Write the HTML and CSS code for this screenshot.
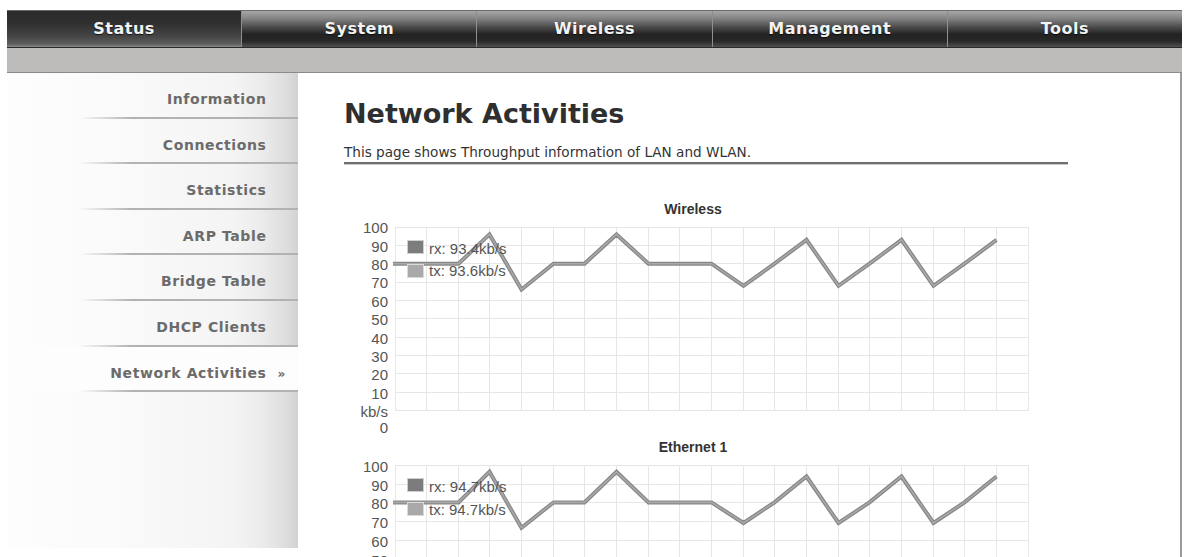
FILE: index.html
```html
<!DOCTYPE html>
<html lang="en">
<head>
<meta charset="utf-8">
<title>Network Activities</title>
<link rel="stylesheet" href="styles.css">
</head>
<body>
<div class="page">
  <nav class="topnav">
    <a class="tab active">Status</a>
    <a class="tab">System</a>
    <a class="tab">Wireless</a>
    <a class="tab">Management</a>
    <a class="tab">Tools</a>
  </nav>
  <div class="strip"></div>
  <div class="layout">
    <aside class="sidebar">
      <ul class="menu">
        <li class="item">Information</li>
        <li class="item">Connections</li>
        <li class="item">Statistics</li>
        <li class="item">ARP Table</li>
        <li class="item">Bridge Table</li>
        <li class="item">DHCP Clients</li>
        <li class="item active">Network Activities<span class="marker">&raquo;</span></li>
      </ul>
    </aside>
    <main class="content">
      <h1 class="title">Network Activities</h1>
      <p class="desc">This page shows Throughput information of LAN and WLAN.</p>
      <div class="charts">
        <svg class="chart" width="724" height="238" viewBox="0 0 724 238">
          <text class="chart-title" x="349" y="16" text-anchor="middle">Wireless</text>
          <path class="grid" d="M51.5 29V213M82.5 29V213M114.5 29V213M145.5 29V213M177.5 29V213M209.5 29V213M240.5 29V213M272.5 29V213M304.5 29V213M335.5 29V213M367.5 29V213M399.5 29V213M430.5 29V213M462.5 29V213M494.5 29V213M525.5 29V213M557.5 29V213M589.5 29V213M620.5 29V213M652.5 29V213M684.5 29V213M51 29.5H685M51 47.5H685M51 65.5H685M51 84.5H685M51 102.5H685M51 120.5H685M51 139.5H685M51 157.5H685M51 175.5H685M51 194.5H685M51 212.5H685"/>
          <g class="axis" text-anchor="end">
            <text x="44" y="35.3">100</text>
            <text x="44" y="53.7">90</text>
            <text x="44" y="72">80</text>
            <text x="44" y="90.4">70</text>
            <text x="44" y="108.8">60</text>
            <text x="44" y="127.2">50</text>
            <text x="44" y="145.5">40</text>
            <text x="44" y="163.9">30</text>
            <text x="44" y="182.3">20</text>
            <text x="44" y="200.6">10</text>
            <text x="44" y="219">kb/s</text>
            <text x="44" y="235">0</text>
          </g>
          <polyline class="line-rx" points="49,65.7 82.5,65.7 114.5,65.7 145.5,36.4 177.5,91.5 209.5,65.7 240.5,65.7 272.5,36.4 304.5,65.7 335.5,65.7 367.5,65.7 399.5,87.8 430.5,65.7 462.5,41.9 494.5,87.8 525.5,65.7 557.5,41.9 589.5,87.8 620.5,65.7 652.5,41.9"/>
          <polyline class="line-tx" points="49,65.7 82.5,65.7 114.5,65.7 145.5,36.4 177.5,91.5 209.5,65.7 240.5,65.7 272.5,36.4 304.5,65.7 335.5,65.7 367.5,65.7 399.5,87.8 430.5,65.7 462.5,41.9 494.5,87.8 525.5,65.7 557.5,41.9 589.5,87.8 620.5,65.7 652.5,41.9"/>
          <g class="legend">
            <rect class="sw-rx" x="63.5" y="42.5" width="16" height="13"/>
            <text x="85" y="55.5">rx: 93.4kb/s</text>
            <rect class="sw-tx" x="63.5" y="66.5" width="16" height="13"/>
            <text x="85" y="78">tx: 93.6kb/s</text>
          </g>
        </svg>
        <svg class="chart" width="724" height="245" viewBox="0 0 724 245">
          <text class="chart-title" x="349" y="16" text-anchor="middle">Ethernet 1</text>
          <path class="grid" d="M51.5 29V217M82.5 29V217M114.5 29V217M145.5 29V217M177.5 29V217M209.5 29V217M240.5 29V217M272.5 29V217M304.5 29V217M335.5 29V217M367.5 29V217M399.5 29V217M430.5 29V217M462.5 29V217M494.5 29V217M525.5 29V217M557.5 29V217M589.5 29V217M620.5 29V217M652.5 29V217M684.5 29V217M51 29.5H685M51 48.5H685M51 66.5H685M51 85.5H685M51 104.5H685M51 123.5H685M51 141.5H685M51 160.5H685M51 179.5H685M51 197.5H685M51 216.5H685"/>
          <g class="axis" text-anchor="end">
            <text x="44" y="36">100</text>
            <text x="44" y="54.7">90</text>
            <text x="44" y="73.4">80</text>
            <text x="44" y="92.1">70</text>
            <text x="44" y="110.8">60</text>
            <text x="44" y="129.5">50</text>
            <text x="44" y="148.2">40</text>
            <text x="44" y="166.9">30</text>
            <text x="44" y="185.6">20</text>
            <text x="44" y="204.3">10</text>
            <text x="44" y="223">kb/s</text>
            <text x="44" y="241">0</text>
          </g>
          <polyline class="line-rx" points="49,66.4 82.5,66.4 114.5,66.4 145.5,35.8 177.5,91.8 209.5,66.4 240.5,66.4 272.5,35.8 304.5,66.4 335.5,66.4 367.5,66.4 399.5,87 430.5,66.4 462.5,40.5 494.5,87 525.5,66.4 557.5,40.5 589.5,87 620.5,66.4 652.5,40.5"/>
          <polyline class="line-tx" points="49,66.4 82.5,66.4 114.5,66.4 145.5,35.8 177.5,91.8 209.5,66.4 240.5,66.4 272.5,35.8 304.5,66.4 335.5,66.4 367.5,66.4 399.5,87 430.5,66.4 462.5,40.5 494.5,87 525.5,66.4 557.5,40.5 589.5,87 620.5,66.4 652.5,40.5"/>
          <g class="legend">
            <rect class="sw-rx" x="63.5" y="42.5" width="16" height="13"/>
            <text x="85" y="55.5">rx: 94.7kb/s</text>
            <rect class="sw-tx" x="63.5" y="66.5" width="16" height="13"/>
            <text x="85" y="78.5">tx: 94.7kb/s</text>
          </g>
        </svg>
      </div>
    </main>
  </div>
</div>
</body>
</html>
```

FILE: styles.css
```css
html {
  overflow: hidden;
}

body {
  margin: 0;
  background: #ffffff;
  font-family: "DejaVu Sans", Verdana, sans-serif;
}

.page {
  margin: 10px 0 0 7px;
  width: 1175px;
}

/* ---------- top navigation ---------- */
.topnav {
  display: flex;
  height: 38px;
  box-sizing: border-box;
  border-top: 1px solid #6a6a6a;
  border-bottom: 1px solid #2a2a2a;
  background: #222;
}

.tab {
  flex: 1;
  text-align: center;
  line-height: 36px;
  font-size: 16px;
  font-weight: bold;
  letter-spacing: 0.5px;
  color: #f3f3f3;
  text-shadow: 0 1px 1px rgba(0, 0, 0, 0.7);
  background: linear-gradient(to bottom, #a8a8a8 0%, #858585 20%, #4a4a4a 45%, #232323 65%, #282828 84%, #505050 100%);
  border-left: 1px solid #8e8e8e;
  cursor: pointer;
}

.tab:first-child {
  border-left: 0;
}

.tab.active {
  background: linear-gradient(to bottom, #2a2a2a 0%, #303030 35%, #454545 70%, #5e5e5e 92%, #8a8a8a 100%);
}

.strip {
  height: 24px;
  background: #bebbbb;
  border-bottom: 1px solid #8a8a8a;
}

/* ---------- layout ---------- */
.layout {
  display: flex;
  align-items: flex-start;
}

.sidebar {
  flex: none;
  width: 291px;
  height: 475px;
  background: linear-gradient(to right, #fdfdfd 0%, #fafafa 40%, #f4f4f4 78%, #ebebeb 88%, #dddddd 96%, #d2d2d2 100%);
}

.menu {
  list-style: none;
  margin: 0;
  padding: 0;
}

.item {
  height: 45.6px;
  box-sizing: border-box;
  padding: 16px 31.5px 0 0;
  text-align: right;
  font-size: 14px;
  line-height: 20px;
  font-weight: bold;
  letter-spacing: 0.6px;
  color: #6b6b6b;
  background: linear-gradient(to right, rgba(175, 175, 175, 0) 72px, #b2b2b2 125px, #b2b2b2 100%) left bottom / 100% 2px no-repeat;
}

.item.active {
  background-color: #fdfdfd;
}

.marker {
  display: inline-block;
  box-sizing: border-box;
  width: 24px;
  margin-right: -24px;
  padding-left: 11px;
  font-size: 12px;
  letter-spacing: 0;
  text-align: left;
}

/* ---------- main content ---------- */
.content {
  flex: 1;
  min-height: 620px;
  padding: 25px 0 0 46px;
  border-right: 2px solid #9b9b9b;
}

.title {
  margin: 0;
  font-size: 27px;
  line-height: 32px;
  font-weight: bold;
  color: #2f2f2f;
}

.desc {
  margin: 13px 0 0;
  width: 724px;
  padding-bottom: 1px;
  font-size: 13.6px;
  line-height: 18px;
  color: #333;
  border-bottom: 2px solid #707070;
  box-shadow: 0 1px 0 #c9c9c9;
}

.charts {
  margin-top: 34px;
}

.chart {
  display: block;
}

.chart-title {
  font-family: "Liberation Sans", Arial, sans-serif;
  font-size: 14px;
  font-weight: bold;
  fill: #333;
}

.grid {
  fill: none;
  stroke: #e6e6e6;
  stroke-width: 1;
}

.axis text {
  font-family: "Liberation Sans", Arial, sans-serif;
  font-size: 15px;
  fill: #555;
}

.line-rx {
  fill: none;
  stroke: #878787;
  stroke-width: 4;
  stroke-linejoin: miter;
}

.line-tx {
  fill: none;
  stroke: #a8a8a8;
  stroke-width: 1.6;
  stroke-linejoin: miter;
}

.legend text {
  font-family: "Liberation Sans", Arial, sans-serif;
  font-size: 15px;
  fill: #555;
}

.sw-rx {
  fill: #7c7c7c;
  stroke: #cfcfcf;
  stroke-width: 1;
}

.sw-tx {
  fill: #a9a9a9;
  stroke: #dadada;
  stroke-width: 1;
}
```
